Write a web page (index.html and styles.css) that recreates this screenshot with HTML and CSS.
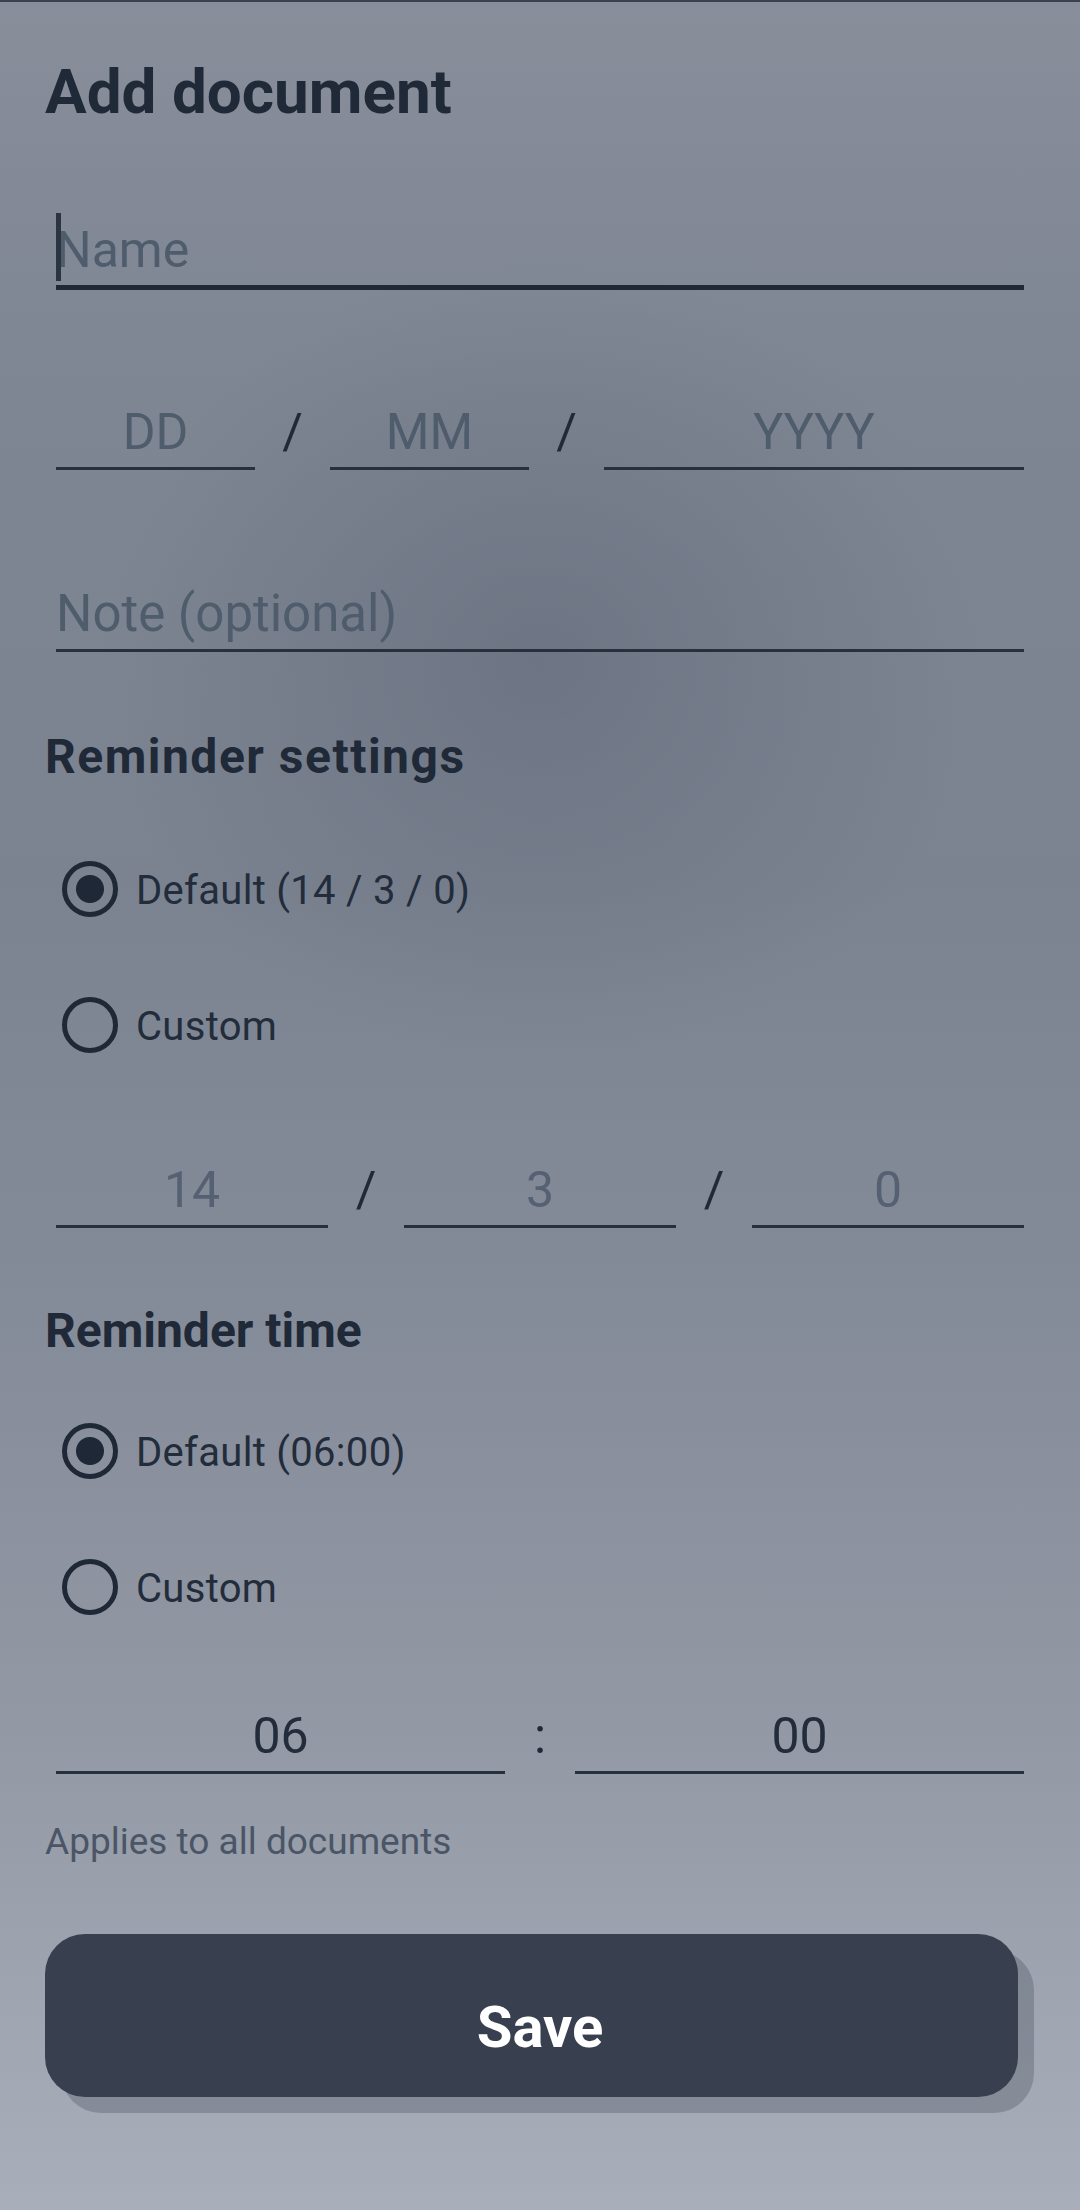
FILE: index.html
```html
<!DOCTYPE html>
<html lang="en">
<head>
  <meta charset="UTF-8">
  <meta name="viewport" content="width=device-width, initial-scale=1.0">
  <title>Add document</title>
  <link rel="stylesheet" href="styles.css">
</head>
<body>
  <div class="page">
    <h1>Add document</h1>

    <div class="field field-name">
      <span class="caret"></span>
      <input type="text" placeholder="Name">
    </div>

    <div class="row row-date">
      <input type="text" class="center" placeholder="DD">
      <span class="sep">/</span>
      <input type="text" class="center" placeholder="MM">
      <span class="sep">/</span>
      <input type="text" class="center" placeholder="YYYY">
    </div>

    <div class="field field-note">
      <input type="text" placeholder="Note (optional)">
    </div>

    <h2 class="section first">Reminder settings</h2>

    <label class="radio-row first">
      <span class="radio checked"></span>
      <span class="radio-label">Default (14 / 3 / 0)</span>
    </label>
    <label class="radio-row">
      <span class="radio"></span>
      <span class="radio-label">Custom</span>
    </label>

    <div class="row row-days">
      <input type="text" class="center" placeholder="14">
      <span class="sep">/</span>
      <input type="text" class="center" placeholder="3">
      <span class="sep">/</span>
      <input type="text" class="center" placeholder="0">
    </div>

    <h2 class="section">Reminder time</h2>

    <label class="radio-row second">
      <span class="radio checked"></span>
      <span class="radio-label">Default (06:00)</span>
    </label>
    <label class="radio-row">
      <span class="radio"></span>
      <span class="radio-label">Custom</span>
    </label>

    <div class="row row-time">
      <input type="text" class="center" value="06">
      <span class="sep">:</span>
      <input type="text" class="center" value="00">
    </div>

    <p class="hint">Applies to all documents</p>

    <button type="button" class="save">Save</button>
  </div>
</body>
</html>
```

FILE: styles.css
```css
html, body {
  margin: 0;
  padding: 0;
}
body {
  font-family: "Roboto", "Liberation Sans", sans-serif;
  min-height: 100vh;
  background:
    radial-gradient(ellipse 440px 400px at 50% 30%, rgba(96, 105, 120, 0.55), rgba(96, 105, 120, 0) 100%),
    linear-gradient(180deg, #888e9a 0%, #7e8593 18%, #7b8391 40%, #848b98 58%, #9298a4 78%, #a9afba 100%);
  color: #1f2937;
}
.page {
  border-top: 2px solid #3a4150;
  padding: 52px 45px 60px;
}
h1 {
  margin: 0;
  font-size: 62px;
  line-height: 76px;
  font-weight: 700;
  color: #1f2937;
}
input {
  font-family: inherit;
  font-size: 50px;
  height: 60px;
  line-height: 60px;
  padding: 0 0 5px;
  margin: 0;
  border: none;
  border-bottom: 3px solid #27303d;
  background: transparent;
  color: #222c3a;
  outline: none;
  width: 100%;
  box-sizing: content-box;
  min-width: 0;
}
input::placeholder {
  color: #4f5c6c;
  opacity: 1;
}
input.center {
  text-align: center;
}
.field {
  position: relative;
  margin: 0 11px;
}
.field-name {
  margin-top: 90px;
}
.field-name input {
  border-bottom: 5px solid #1f2836;
}
.caret {
  position: absolute;
  left: 0;
  top: -7px;
  width: 5px;
  height: 68px;
  background: #2b3441;
}
.field-note {
  margin-top: 114px;
}
.field-note input {
  font-size: 51px;
}
.row {
  display: grid;
  align-items: start;
  margin: 0 11px;
}
.row-date {
  margin-top: 112px;
  grid-template-columns: 199px 75px 199px 75px 1fr;
}
.row-days {
  margin-top: 107px;
  grid-template-columns: 1fr 76px 1fr 76px 1fr;
}
.row-days input::placeholder {
  color: #556172;
}
.row-time {
  margin-top: 91px;
  grid-template-columns: 1fr 70px 1fr;
}
.sep {
  font-size: 50px;
  line-height: 60px;
  text-align: center;
  color: #1f2937;
}
.section {
  margin: 74px 0 0;
  font-size: 48px;
  line-height: 58px;
  font-weight: 700;
  color: #1f2937;
}
.section.first {
  margin-top: 76px;
  letter-spacing: 1.5px;
}
.radio-row {
  display: flex;
  align-items: center;
  gap: 18px;
  height: 56px;
  margin: 80px 0 0 17px;
}
.radio-row.first {
  margin-top: 75px;
}
.radio-row.second {
  margin-top: 63px;
}
.radio {
  width: 46px;
  height: 46px;
  border: 5px solid #1f2836;
  border-radius: 50%;
  flex-shrink: 0;
}
.radio.checked {
  background: radial-gradient(circle, #1f2836 0 13.5px, transparent 14.5px);
}
.radio-label {
  font-size: 40px;
  line-height: 48px;
  letter-spacing: 0.3px;
  padding-top: 3px;
  color: #222c3a;
}
.hint {
  margin: 47px 0 0;
  font-size: 37px;
  line-height: 42px;
  color: #4a5566;
}
.save {
  display: block;
  width: calc(100% - 17px);
  margin-top: 71px;
  height: 163px;
  padding: 60px 0 37px 17px;
  border: none;
  border-radius: 40px;
  background: #383f4f;
  box-shadow: 16px 16px 0 rgba(55, 63, 79, 0.28);
  color: #fff;
  font-family: inherit;
  font-size: 58px;
  line-height: 66px;
  font-weight: 700;
  cursor: pointer;
}
```
